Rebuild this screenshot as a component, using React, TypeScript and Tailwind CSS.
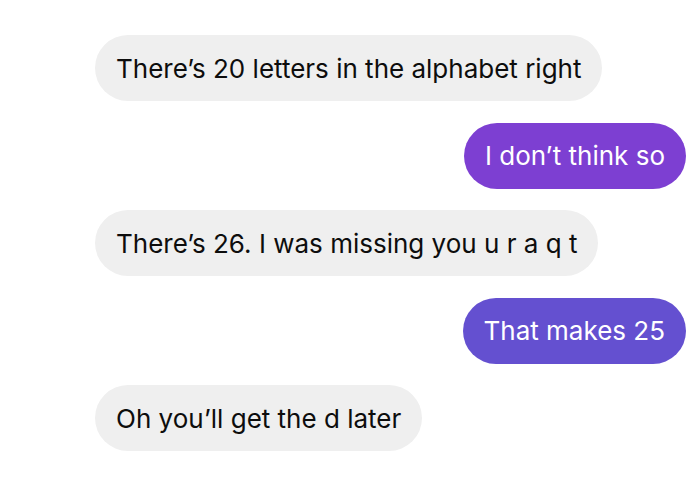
type Message = {
  text: string;
  mine: boolean;
  color?: string;
};

const messages: Message[] = [
  { text: "There’s 20 letters in the alphabet right", mine: false },
  { text: "I don’t think so", mine: true, color: "bg-[#7d3fd2]" },
  { text: "There’s 26. I was missing you u r a q t", mine: false },
  { text: "That makes 25", mine: true, color: "bg-[#6450d0]" },
  { text: "Oh you’ll get the d later", mine: false },
];

export default function App() {
  return (
    <div className="w-[700px] h-[488px] bg-white overflow-hidden font-['Inter',sans-serif]">
      <div className="flex flex-col gap-[21.5px] pt-[35px] pl-[95px] pr-[14px]">
        {messages.map((m, i) => (
          <div
            key={i}
            className={`h-[66px] flex items-center rounded-full px-[21px] text-[26px] ${
              m.mine
                ? `self-end text-white ${m.color}`
                : "self-start bg-[#efefef] text-[#0d0d0d]"
            }`}
          >
            {m.text}
          </div>
        ))}
      </div>
    </div>
  );
}
